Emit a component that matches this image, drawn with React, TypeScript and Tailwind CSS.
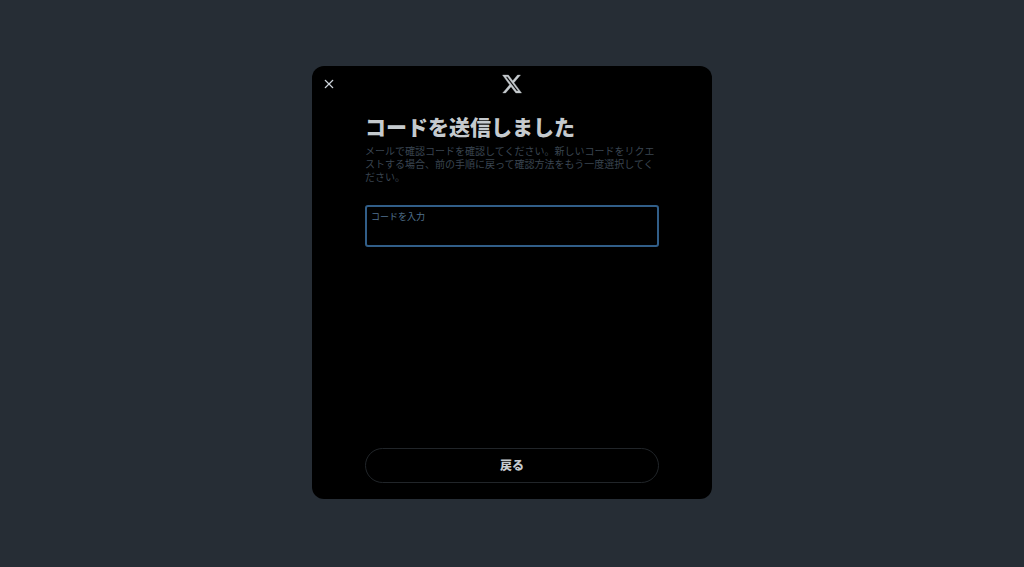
export default function App() {
  return (
    <div className="min-h-screen flex items-center justify-center pb-0.5 bg-[#262d35] font-['Liberation_Sans','Noto_Sans_CJK_JP',sans-serif]">
      <main role="dialog" aria-labelledby="title" className="w-full max-w-[400px] min-h-[433px] flex flex-col rounded-xl bg-black">
        <header className="grid grid-cols-3 items-center h-9 px-2.5">
          <button type="button" aria-label="閉じる" className="w-fit text-[#d5dce3]">
            <svg viewBox="0 0 24 24" className="w-3.5 h-3.5" fill="currentColor" stroke="currentColor" strokeWidth="0.3">
              <path d="M10.59 12L4.54 5.96l1.42-1.42L12 10.59l6.04-6.05 1.42 1.42L13.41 12l6.05 6.04-1.42 1.42L12 13.41l-6.04 6.05-1.42-1.42L10.59 12z" />
            </svg>
          </button>
          <svg viewBox="0 0 24 24" className="w-[22px] h-[22px] justify-self-center text-[#c5cace]" fill="currentColor" stroke="currentColor" strokeWidth="0.4">
            <path d="M18.044 2.25h3.208l-7.127 8.26 8.302 11.24H16.17l-5.214-6.817L4.99 21.75H1.88l7.53-8.835L1.654 2.25H8.08l4.713 6.231zm-.961 17.52h1.833L7.084 4.126H5.117z" />
          </svg>
        </header>

        <form className="flex-1 flex flex-col px-[53px] pt-3 pb-4">
          <h1 id="title" className="text-[21px] leading-7 font-black text-[#c5cace]">コードを送信しました</h1>
          <p className="mt-[3px] text-[10px] leading-[13px] text-[#3a4551]">
            メールで確認コードを確認してください。新しいコードをリクエストする場合、前の手順に戻って確認方法をもう一度選択してください。
          </p>

          <div className="mt-[21px] flex flex-col rounded-[3px] border-2 border-[#315e88] px-1 py-[3px]">
            <label htmlFor="code" className="text-[9px] leading-[14px] text-[#52738f]">コードを入力</label>
            <input id="code" type="text" className="h-[18px] text-[11px] text-[#c5cace] outline-none" />
          </div>

          <button type="button" className="mt-auto h-[35px] rounded-full border border-[#212529] text-xs font-black text-[#c5cace]">
            戻る
          </button>
        </form>
      </main>
    </div>
  )
}
